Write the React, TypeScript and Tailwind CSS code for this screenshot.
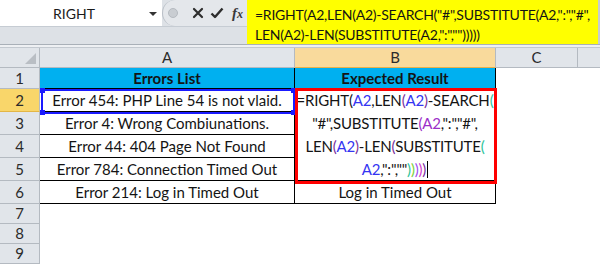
import React from "react";

const F = { fontFamily: "Lato, 'Open Sans', sans-serif" };

const blue = "text-[#3535f2]";
const purp = "text-[#7a2f9e]";
const grn = "text-[#2fc49a]";

function HeaderCell({ children, className = "" }: { children?: React.ReactNode; className?: string }) {
  return (
    <div
      className={
        "flex items-center justify-center bg-[#e1e5ea] border-r border-b border-[#b4bac1] text-[15px] text-[#2b2b2b] " +
        className
      }
    >
      {children}
    </div>
  );
}

function Cell({ children, className = "" }: { children?: React.ReactNode; className?: string }) {
  return (
    <div
      className={
        "flex items-center justify-center border-r border-b border-black text-[15px] text-[#141414] whitespace-nowrap overflow-visible " +
        className
      }
    >
      {children}
    </div>
  );
}

export default function App() {
  return (
    <div className="relative w-[600px] h-[267px] overflow-hidden bg-white" style={F}>
      {/* Formula bar */}
      <div className="flex h-[45px] bg-[#dde1e6] border-b border-[#a9b0b8]">
        <div className="w-[247px] flex flex-col">
          <div className="flex h-[27px] border-b border-[#c6ccd3]">
            <div className="relative w-[162px] bg-white flex items-center justify-center pr-[14px] text-[14px] text-[#1a1a1a]">
              RIGHT
              <div className="absolute right-[5px] top-[12px] w-0 h-0 border-l-[4px] border-r-[4px] border-t-[4px] border-l-transparent border-r-transparent border-t-[#333]" />
            </div>
            <div className="flex-1 flex items-center rounded-l-[14px] bg-[#e4e7eb] border-l border-[#b9bfc6] pl-[3px]">
              <div className="w-[10px] h-[10px] rounded-full bg-[#c9cdd2] border border-[#b5bac0] ml-[2px]" />
              <svg className="ml-[14px]" width="12" height="12" viewBox="0 0 12 12">
                <path d="M2 2 L10 10 M10 2 L2 10" stroke="#2d2d2d" strokeWidth="2.2" strokeLinecap="round" />
              </svg>
              <svg className="ml-[6px]" width="14" height="12" viewBox="0 0 14 12">
                <path d="M1.5 6.5 L5 10 L12.5 1.5" stroke="#2d2d2d" strokeWidth="2.4" fill="none" strokeLinejoin="round" />
              </svg>
              <span
                className="ml-[8px] text-[15px] italic font-bold text-[#3a3a3a]"
                style={{ fontFamily: "'Liberation Serif', serif" }}
              >
                f<span className="text-[12px]">x</span>
              </span>
            </div>
          </div>
        </div>
        <div className="flex-1 bg-[#ffff00] border-r-[2px] border-[#c6ccd3] pl-[8px] pt-[5px] text-[14px] tracking-[-0.25px] leading-[20px] text-[#141414] whitespace-nowrap">
          <div>=RIGHT(A2,LEN(A2)-SEARCH("#",SUBSTITUTE(A2,":","#",</div>
          <div>LEN(A2)-LEN(SUBSTITUTE(A2,":","")))))</div>
        </div>
      </div>
      <div className="h-[3px] bg-[#eef0f3] border-b border-[#c3c9d0]" />

      {/* Sheet */}
      <div className="grid grid-cols-[40px_255px_201px_82px_1fr] grid-rows-[20px_21px_23px_23px_23px_23px_23px_20px_20px_20px]">
        {/* column headers */}
        <div className="relative bg-[#e1e5ea] border-r border-b border-[#b4bac1]">
          <div
            className="absolute right-[3px] bottom-[3px] w-0 h-0"
            style={{ borderLeft: "11px solid transparent", borderBottom: "11px solid #b9bec4" }}
          />
        </div>
        <HeaderCell>A</HeaderCell>
        <HeaderCell className="bg-[#f9da9c] border-b-[#e8b04a]">B</HeaderCell>
        <HeaderCell>C</HeaderCell>
        <HeaderCell className="border-r-0" />

        {/* row 1 */}
        <HeaderCell>1</HeaderCell>
        <Cell className="bg-[#00b0f0] font-bold">Errors List</Cell>
        <Cell className="bg-[#00b0f0] font-bold">Expected Result</Cell>
        <div />
        <div />

        {/* row 2 */}
        <HeaderCell className="bg-[#f9d66a] border-b-[#e3b646]">2</HeaderCell>
        <Cell>Error 454: PHP Line 54 is not vlaid.</Cell>
        <div className="row-span-4 flex flex-col items-center border-r border-b border-black text-[15px] tracking-[-0.2px] text-[#141414] leading-[23px] whitespace-nowrap">
          <div className="-ml-[4px] -mr-[4px]">
            =RIGHT(<span className={blue}>A2</span>,LEN<span className={purp}>(</span>
            <span className={blue}>A2</span>
            <span className={purp}>)</span>-SEARCH<span className={grn}>(</span>
          </div>
          <div>
            "#",SUBSTITUTE<span className="text-[#9c30c8]">(A2</span>,":","#",
          </div>
          <div>
            LEN<span className={purp}>(</span>
            <span className={blue}>A2</span>
            <span className={purp}>)</span>-LEN<span className={purp}>(</span>SUBSTITUTE
            <span className={grn}>(</span>
          </div>
          <div className="flex items-center">
            <span className={blue}>A2</span>
            <span>,":",""</span>
            <span className={grn}>)</span>
            <span className="text-[#7ccf3a]">)</span>
            <span className="text-[#9a4cf0]">)</span>
            <span className="text-[#d13bd0]">)</span>
            <span className="text-[#7a2f9e]">)</span>
            <span className="inline-block w-px h-[17px] bg-black ml-[1px]" />
          </div>
        </div>
        <div />
        <div />

        {/* row 3 */}
        <HeaderCell>3</HeaderCell>
        <Cell>Error 4: Wrong Combiunations.</Cell>
        <div />
        <div />

        {/* row 4 */}
        <HeaderCell>4</HeaderCell>
        <Cell>Error 44: 404 Page Not Found</Cell>
        <div />
        <div />

        {/* row 5 */}
        <HeaderCell>5</HeaderCell>
        <Cell>Error 784: Connection Timed Out</Cell>
        <div />
        <div />

        {/* row 6 */}
        <HeaderCell>6</HeaderCell>
        <Cell>Error 214: Log in Timed Out</Cell>
        <Cell>Log in Timed Out</Cell>
        <div />
        <div />

        {/* rows 7-9 */}
        <HeaderCell>7</HeaderCell>
        <div className="col-span-4" />
        <HeaderCell>8</HeaderCell>
        <div className="col-span-4" />
        <HeaderCell>9</HeaderCell>
        <div className="col-span-4" />
      </div>

      {/* A2 selection (formula reference) */}
      <div className="absolute left-[41px] top-[89px] w-[254px] h-[25px] border-[2px] border-[#1a1aff] pointer-events-none">
        <div className="absolute -left-[3px] -top-[3px] w-[5px] h-[5px] bg-[#1a1aff]" />
        <div className="absolute -right-[3px] -top-[3px] w-[5px] h-[5px] bg-[#1a1aff]" />
        <div className="absolute -left-[3px] -bottom-[3px] w-[5px] h-[5px] bg-[#1a1aff]" />
        <div className="absolute -right-[3px] -bottom-[3px] w-[5px] h-[5px] bg-[#1a1aff]" />
      </div>

      {/* red annotation */}
      <div className="absolute left-[295px] top-[88px] w-[202px] h-[96px] border-[3px] border-[#ff0000] pointer-events-none" />
    </div>
  );
}
